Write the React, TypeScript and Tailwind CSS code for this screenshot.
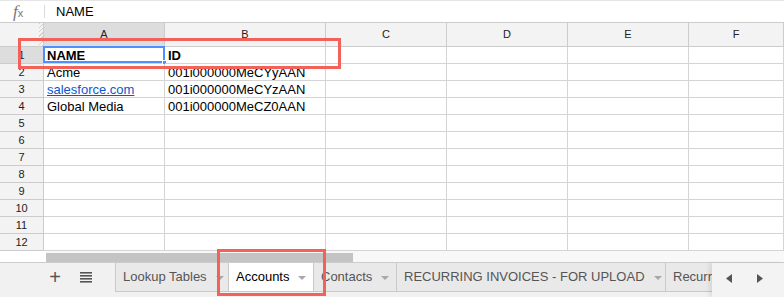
import React from 'react';

const cols = ['A', 'B', 'C', 'D', 'E', 'F'];
const widths = ['w-[121px]', 'w-[161px]', 'w-[121px]', 'w-[121px]', 'w-[121px]', 'w-[95px]'];

const rows: { a?: React.ReactNode; b?: React.ReactNode }[] = [
  { a: <span className="font-bold">NAME</span>, b: <span className="font-bold">ID</span> },
  { a: 'Acme', b: '001i000000MeCYyAAN' },
  { a: <span className="text-[#1155cc] underline">salesforce.com</span>, b: '001i000000MeCYzAAN' },
  { a: 'Global Media', b: '001i000000MeCZ0AAN' },
  {}, {}, {}, {}, {}, {}, {}, {},
];

const tabs = [
  { name: 'Lookup Tables', w: 'w-[114px] border-l' },
  { name: 'Accounts', w: 'w-[85px]', active: true },
  { name: 'Contacts', w: 'w-[83px]' },
  { name: 'RECURRING INVOICES - FOR UPLOAD', w: 'w-[269px]' },
];

const Caret = () => (
  <svg width="8" height="4" viewBox="0 0 8 4" className="ml-[9px] mt-[1px] shrink-0">
    <path d="M0 0h8L4 4z" fill="#a8a8a8" />
  </svg>
);

const App = () => {
  return (
    <div className="relative w-[784px] h-[297px] overflow-hidden bg-white font-['Liberation_Sans',Arial,sans-serif] text-[13px] text-black">
      {/* formula bar */}
      <div className="h-[23px] flex items-center border-t border-t-[#e6e6e6] border-b border-b-[#cccccc]">
        <div className="w-[44px] pl-[13px] text-[#777] italic font-['Liberation_Serif',serif] text-[17px] leading-none">
          f<span className="text-[11px] not-italic font-['Liberation_Sans',sans-serif]">x</span>
        </div>
        <div className="w-px h-[13px] bg-[#d9d9d9]" />
        <div className="pl-[11px] text-[13px]">NAME</div>
      </div>

      {/* column headers */}
      <div className="flex h-[24px] bg-[#f3f3f3] border-b border-b-[#cccccc]">
        <div className="w-[44px] shrink-0 border-r border-r-[#cccccc] bg-[repeating-linear-gradient(135deg,#d0d0d0_0,#d0d0d0_1px,#f3f3f3_1px,#f3f3f3_3px)] bg-[length:4px_100%] bg-no-repeat bg-right" />
        {cols.map((c, i) => (
          <div
            key={c}
            className={`${widths[i]} shrink-0 border-r border-r-[#cccccc] flex items-center justify-center text-[11px] text-[#222] ${i === 0 ? 'bg-[#dddddd]' : ''}`}
          >
            {c}
          </div>
        ))}
      </div>

      {/* rows */}
      {rows.map((r, idx) => (
        <div key={idx} className="flex h-[17px]">
          <div
            className={`w-[44px] shrink-0 border-r border-b border-[#cccccc] flex items-center justify-center text-[11px] text-[#222] ${idx === 0 ? 'bg-[#dddddd] text-[#1a5fd0]' : 'bg-[#f3f3f3]'}`}
          >
            {idx + 1}
          </div>
          {cols.map((c, i) => (
            <div
              key={c}
              className={`${widths[i]} shrink-0 border-r border-b border-[#d4d4d4] relative flex items-center pl-[3px] leading-none whitespace-nowrap overflow-visible`}
            >
              {i === 0 ? r.a : i === 1 ? r.b : null}
              {idx === 0 && i === 0 && (
                <>
                  <div className="absolute -left-px -top-px w-[122px] h-[17px] border-2 border-[#4d90fe] pointer-events-none" />
                  <div className="absolute right-[-3px] bottom-[-2px] w-[5px] h-[5px] bg-[#4d90fe] border border-white" />
                </>
              )}
            </div>
          ))}
        </div>
      ))}

      {/* horizontal scroll */}
      <div className="flex h-[12px] bg-[#f8f8f8] border-b border-b-[#cccccc]">
        <div className="w-[46px] shrink-0 bg-white" />
        <div className="w-[307px] h-[9px] mt-[2px] bg-[#c4c4c4]" />
      </div>

      {/* sheet tabs */}
      <div className="flex h-[34px] bg-[#f1f1f1]">
        <div className="w-[42px] shrink-0" />
        <div className="w-[26px] h-[28px] flex items-center justify-center text-[20px] text-[#555] leading-none">+</div>
        <div className="w-[5px]" />
        <div className="w-[26px] h-[28px] flex items-center justify-center">
          <svg width="12" height="11" viewBox="0 0 12 11">
            <rect x="0" y="0" width="12" height="1.6" fill="#555" />
            <rect x="0" y="3" width="12" height="1.6" fill="#555" />
            <rect x="0" y="6" width="12" height="1.6" fill="#555" />
            <rect x="0" y="9" width="12" height="1.6" fill="#555" />
          </svg>
        </div>
        <div className="w-[16px] shrink-0" />
        {tabs.map((t) => (
          <div
            key={t.name}
            className={`${t.w} shrink-0 h-[29px] flex items-center pl-[7px] border-r border-b border-[#c9c9c9] whitespace-nowrap text-[13px] ${t.active ? 'bg-white text-black' : 'bg-[#e9e9e9] text-[#555]'}`}
          >
            {t.name}
            <Caret />
          </div>
        ))}
        <div className="w-[46px] shrink-0 h-[29px] border-b border-[#c9c9c9] bg-[#e9e9e9] pl-[7px] flex items-center text-[#555] overflow-hidden whitespace-nowrap">
          Recurr
        </div>
        <div className="flex-1 h-full bg-[#f3f3f3] shadow-[-3px_0_4px_rgba(0,0,0,0.08)] flex items-start pt-[11px] gap-[25px] pl-[14px]">
          <svg width="6" height="9" viewBox="0 0 6 9"><path d="M6 0v9L0 4.5z" fill="#555" /></svg>
          <svg width="6" height="9" viewBox="0 0 6 9"><path d="M0 0v9l6-4.5z" fill="#555" /></svg>
        </div>
      </div>

      {/* annotations */}
      <div className="absolute left-[18px] top-[38px] w-[323px] h-[31px] border-[3px] border-[#f2625a]" />
      <div className="absolute left-[217px] top-[249px] w-[109px] h-[47px] border-[3px] border-[#f2625a]" />
    </div>
  );
};

export default App;
